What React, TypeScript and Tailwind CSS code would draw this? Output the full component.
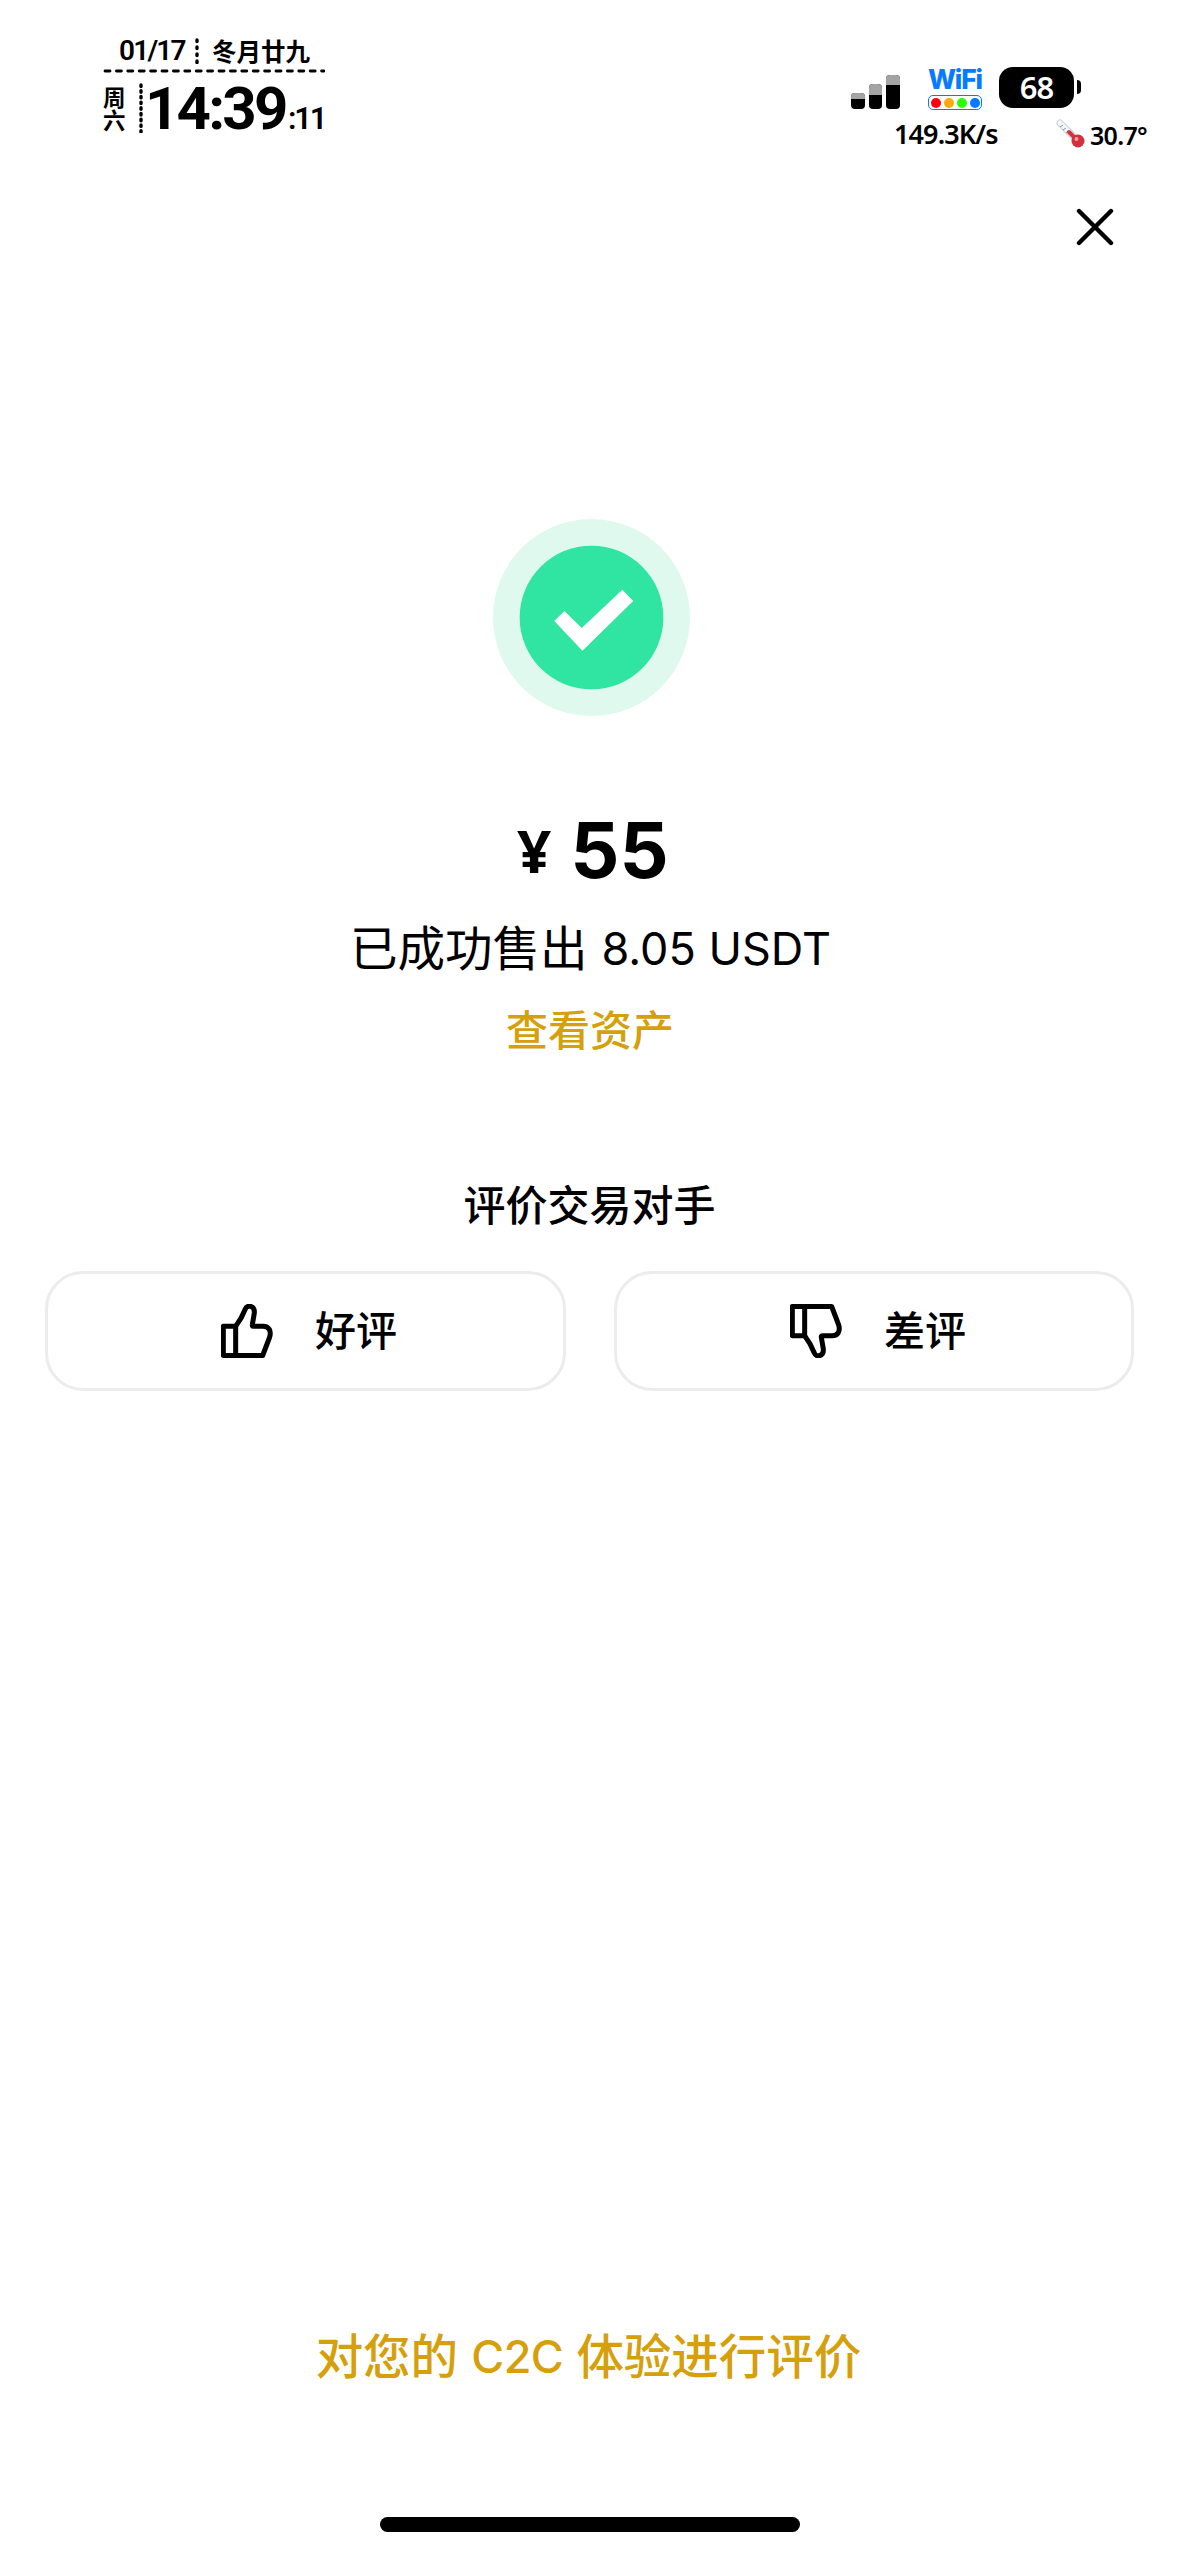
type IconProps = { className?: string };

function ThumbUp({ className }: IconProps) {
  return (
    <svg
      viewBox="34 132 156 162"
      className={className}
      fill="none"
      stroke="currentColor"
      strokeWidth={15}
      strokeLinejoin="round"
    >
      <path d="M41 199H78V286.5H41Z" />
      <path d="M78 286.5H159L179 234C187 212 177 199 160 199H131Q127 199 128 194L134 159C136 136 112 133 107 147C100 165 91 182 78 199" />
    </svg>
  );
}

function SuccessBadge() {
  return (
    <svg viewBox="0 0 196 196" className="h-[197px] w-[197px]">
      <circle cx="98" cy="98" r="98" fill="#dff9ee" />
      <circle cx="98" cy="98" r="71.5" fill="#2fe5a1" />
      <path d="M61 101.5L71 91.5L88.3 108.5L128.7 70.5L139.5 81.5L89 131Z" fill="#fff" />
    </svg>
  );
}

function Thermometer() {
  return (
    <svg viewBox="0 0 30 30" className="h-[30px] w-[30px]">
      <path d="M4 4L21 21" stroke="#c9d3d8" strokeWidth="7" strokeLinecap="round" />
      <path d="M4 4L21 21" stroke="#f4f7f8" strokeWidth="5" strokeLinecap="round" />
      <path d="M4 8l3-2M7 11l3-2M10 14l3-2" stroke="#8b979d" strokeWidth="1" />
      <path d="M13 13L21 21" stroke="#d5343f" strokeWidth="4" strokeLinecap="round" />
      <circle cx="22" cy="22" r="6.5" fill="#d32f3c" />
      <circle cx="20.5" cy="20" r="2" fill="#f3a0a5" />
    </svg>
  );
}

const signalBars = [
  { bar: 'h-[16px]', top: 'h-[6px]' },
  { bar: 'h-[25px]', top: 'h-[11px]' },
  { bar: 'h-[34px]', top: 'h-[10px]' },
];

const wifiDots = ['bg-[#ff0010]', 'bg-[#ffa80a]', 'bg-[#2bff00]', 'bg-[#067bff]'];

function Clock() {
  return (
    <div className="w-[222px] pt-[36px] ml-[103px] font-['Roboto','Noto_Sans_CJK_SC',sans-serif] font-semibold">
      <div className="flex h-[30px] items-center pl-[16px]">
        <span className="w-[76px] text-[28px] leading-[30px] tracking-[-1.8px]">01/17</span>
        <svg className="h-[26px] w-[4px]" viewBox="0 0 4 26">
          <path d="M2 2V25" stroke="#000" strokeWidth="3.4" strokeLinecap="round" strokeDasharray="1.5 5.5" />
        </svg>
        <span className="ml-[13px] text-[24.5px] leading-[30px] font-['Noto_Sans_CJK_SC',sans-serif]">冬月廿九</span>
      </div>
      <svg className="mt-[3px] h-[4px] w-[222px]" viewBox="0 0 222 4">
        <path d="M2 2H221" stroke="#000" strokeWidth="2.8" strokeLinecap="round" strokeDasharray="5 6.4" />
      </svg>
      <div className="mt-[9px] flex h-[52px]">
        <div className="flex w-[36px] shrink-0 flex-col pt-[3px] font-['Noto_Sans_CJK_SC',sans-serif] text-[22.5px] leading-[23px]">
          <span>周</span>
          <span>六</span>
        </div>
        <svg className="mt-[1px] h-[50px] w-[4px] shrink-0" viewBox="0 0 4 50">
          <path d="M2 2V49" stroke="#000" strokeWidth="3.4" strokeLinecap="round" strokeDasharray="1.5 4.2" />
        </svg>
        <div className="ml-[2px] flex items-baseline whitespace-nowrap">
          <span className="w-[143px] shrink-0 text-[60px] leading-[54px] font-bold tracking-[-2.8px]">14:39</span>
          <span className="text-[31px] leading-[40px] tracking-[-2.2px]">:11</span>
        </div>
      </div>
    </div>
  );
}

function StatusIcons() {
  return (
    <div className="ml-auto w-[328px] pt-[67px] font-['Noto_Sans',sans-serif]">
      <div className="flex h-[42px]">
        <div className="flex h-[42px] w-[77px] items-end gap-[4px]">
          {signalBars.map((s) => (
            <div key={s.bar} className={`w-[13.5px] overflow-hidden rounded-[4px] bg-black ${s.bar}`}>
              <div className={`bg-[#a4a4a4] ${s.top}`} />
            </div>
          ))}
        </div>
        <div className="w-[71px]">
          <div className="h-[28px] text-[26.5px] leading-[25px] font-extrabold text-[#067bff] font-['Inter',sans-serif] tracking-[-1.2px]">
            WiFi
          </div>
          <div className="flex h-[15px] w-[54px] items-center justify-center gap-[3px] rounded-[5px] border-[1.5px] border-[#067bff]">
            {wifiDots.map((dot) => (
              <div key={dot} className={`h-[10px] w-[10px] rounded-full ${dot}`} />
            ))}
          </div>
        </div>
        <div className="flex h-[41px] w-[75px] items-center justify-center rounded-[14px] bg-black text-[31px] font-semibold tracking-[-1px] text-white">
          68
        </div>
        <div className="mt-[13px] ml-[3px] h-[14px] w-[4px] rounded-r-full bg-black" />
      </div>
      <div className="flex h-[44px] pt-[10px] pl-[43px] font-semibold">
        <span className="w-[162px] text-[27px] leading-[30px] tracking-[-0.9px]">149.3K/s</span>
        <Thermometer />
        <span className="ml-[4px] pt-[1px] text-[25px] leading-[30px] tracking-[-0.7px]">30.7°</span>
      </div>
    </div>
  );
}

export default function App() {
  return (
    <div className="flex h-[2556px] w-[1179px] flex-col overflow-hidden bg-white text-black font-['Inter','Noto_Sans_CJK_SC',sans-serif]">
      <header className="flex h-[160px]">
        <Clock />
        <StatusIcons />
      </header>

      <div className="flex h-[359px] justify-end pt-[48px] pr-[65px]">
        <button aria-label="关闭" className="h-[38px] w-[38px]">
          <svg viewBox="0 0 38 38" className="h-[38px] w-[38px]">
            <path d="M3 3L35 35M35 3L3 35" stroke="#000" strokeWidth="4.4" strokeLinecap="round" />
          </svg>
        </button>
      </div>

      {/* Result */}
      <section className="flex flex-col items-center">
        <div className="pl-[4px]">
          <SuccessBadge />
        </div>
        <div className="mt-[82px] flex h-[104px] items-center gap-[18px] pl-[6px] font-bold">
          <span className="w-[36px] text-center text-[60px] leading-[104px] font-['Noto_Sans',sans-serif]">¥</span>
          <span className="text-[77px] leading-[104px]">55</span>
        </div>
        <div className="mt-[13px] flex h-[68px] items-center pl-[2px] text-[47.5px] leading-[68px] whitespace-pre">
          <span>已成功售出</span>
          <span className="pl-[14px] text-[45px]">8.05 USDT</span>
        </div>
        <a href="#" className="mt-[18px] pl-[1px] text-[42px] leading-[60px] font-medium text-[#d69f0c]">查看资产</a>
      </section>

      {/* Counterparty rating */}
      <section className="mt-[115px] flex flex-col items-center">
        <h2 className="text-[42px] leading-[60px] font-medium">评价交易对手</h2>
        <div className="mt-[35px] flex w-full gap-[48px] pl-[45px]">
          <button className="flex h-[120px] w-[521px] items-center rounded-[38px] border-[3px] border-[#ececec] pl-[173px]">
            <ThumbUp className="h-[54px] w-[52px]" />
            <span className="ml-[42px] text-[41px] leading-[60px] font-medium">好评</span>
          </button>
          <button className="flex h-[120px] w-[520px] items-center rounded-[38px] border-[3px] border-[#ececec] pl-[173px]">
            <ThumbUp className="h-[54px] w-[52px] -scale-y-100" />
            <span className="ml-[42px] text-[41px] leading-[60px] font-medium">差评</span>
          </button>
        </div>
      </section>

      <footer className="mt-auto flex flex-col items-center pb-[24px]">
        <a href="#" className="mb-[126px] flex h-[68px] items-center pr-[2px] text-[47.5px] leading-[68px] font-medium text-[#d69f0c]">
          <span>对您的</span>
          <span className="px-[13px] text-[45px] tracking-[-0.5px]">C2C</span>
          <span>体验进行评价</span>
        </a>
        <div className="h-[15px] w-[420px] rounded-full bg-black" />
      </footer>
    </div>
  );
}
